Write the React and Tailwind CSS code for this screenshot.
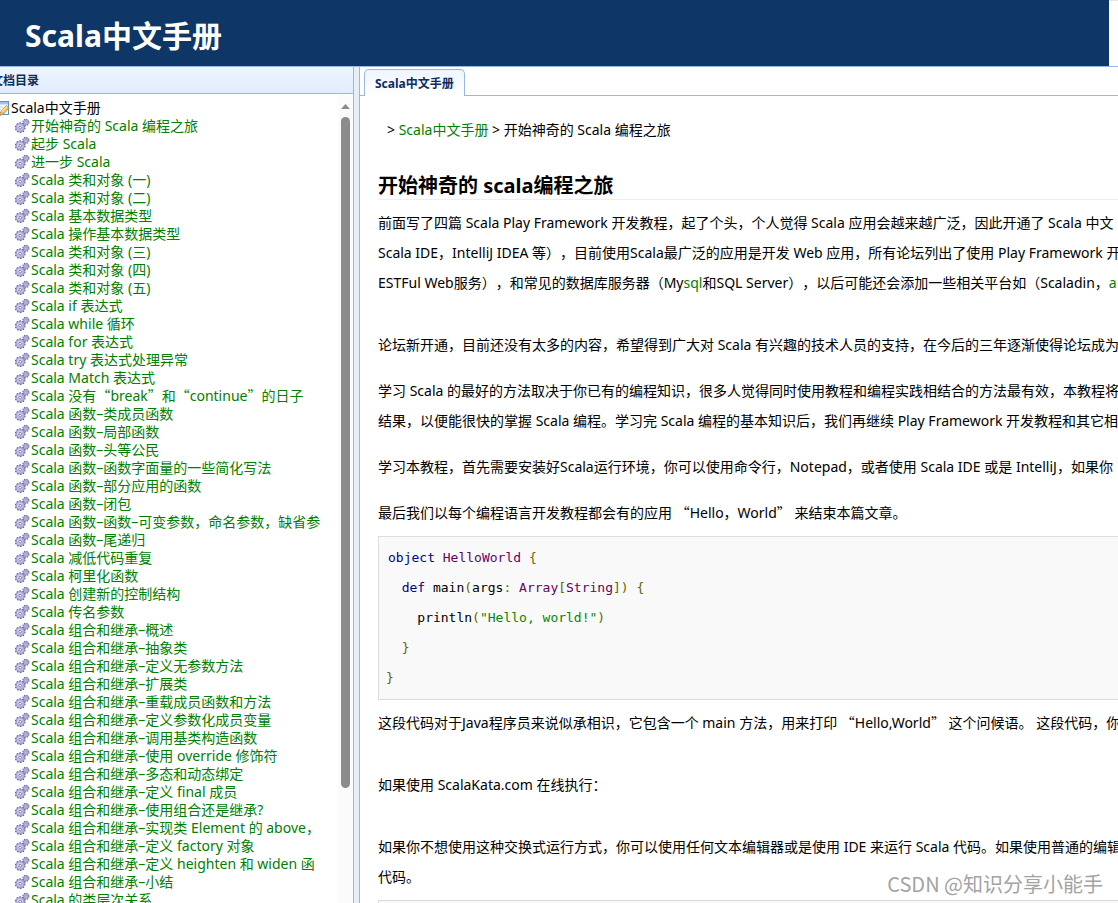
import React from "react";

const chapters = [
    "开始神奇的 Scala 编程之旅",
    "起步 Scala",
    "进一步 Scala",
    "Scala 类和对象 (一)",
    "Scala 类和对象 (二)",
    "Scala 基本数据类型",
    "Scala 操作基本数据类型",
    "Scala 类和对象 (三)",
    "Scala 类和对象 (四)",
    "Scala 类和对象 (五)",
    "Scala if 表达式",
    "Scala while 循环",
    "Scala for 表达式",
    "Scala try 表达式处理异常",
    "Scala Match 表达式",
    "Scala 没有“break”和“continue”的日子",
    "Scala 函数–类成员函数",
    "Scala 函数–局部函数",
    "Scala 函数–头等公民",
    "Scala 函数–函数字面量的一些简化写法",
    "Scala 函数–部分应用的函数",
    "Scala 函数–闭包",
    "Scala 函数–函数–可变参数，命名参数，缺省参",
    "Scala 函数–尾递归",
    "Scala 减低代码重复",
    "Scala 柯里化函数",
    "Scala 创建新的控制结构",
    "Scala 传名参数",
    "Scala 组合和继承–概述",
    "Scala 组合和继承–抽象类",
    "Scala 组合和继承–定义无参数方法",
    "Scala 组合和继承–扩展类",
    "Scala 组合和继承–重载成员函数和方法",
    "Scala 组合和继承–定义参数化成员变量",
    "Scala 组合和继承–调用基类构造函数",
    "Scala 组合和继承–使用 override 修饰符",
    "Scala 组合和继承–多态和动态绑定",
    "Scala 组合和继承–定义 final 成员",
    "Scala 组合和继承–使用组合还是继承?",
    "Scala 组合和继承–实现类 Element 的 above，",
    "Scala 组合和继承–定义 factory 对象",
    "Scala 组合和继承–定义 heighten 和 widen 函",
    "Scala 组合和继承–小结",
    "Scala 的类层次关系",
];

// Curly quotes are full width in Chinese text, so they take the CJK face
const Text = ({children}) =>
    children.split(/([“”])/).map((part, i) =>
        part === "“" || part === "”"
            ? <span key={i} className="leading-none font-['Noto_Sans_CJK_SC',sans-serif]">{part}</span>
            : part
    );

const GearsIcon = () => (
    <svg viewBox="0 0 16 16" className="w-4 h-4 shrink-0" aria-hidden>
        <circle cx="11.9" cy="4.3" r="2.9" fill="none" stroke="#66669c" strokeWidth="1.4" strokeDasharray="1.25 1.03"/>
        <circle cx="11.9" cy="4.3" r="2.6" fill="#b4b4dc" stroke="#8080b4" strokeWidth="0.6"/>
        <circle cx="11.9" cy="4.3" r="0.9" fill="#f4f4ff" stroke="#7474a8" strokeWidth="0.5"/>
        <circle cx="6.2" cy="9.7" r="4.6" fill="none" stroke="#66669c" strokeWidth="1.6" strokeDasharray="1.6 1.29"/>
        <circle cx="6.2" cy="9.7" r="4.1" fill="#b8b8e0" stroke="#8484b8" strokeWidth="0.7"/>
        <circle cx="5.7" cy="9.2" r="2.6" fill="#cacaf0"/>
        <circle cx="6.2" cy="9.7" r="1.3" fill="#f4f4ff" stroke="#7070a6" strokeWidth="0.8"/>
    </svg>
);

const EditIcon = () => (
    <svg viewBox="0 0 16 16" className="w-4 h-4 shrink-0" aria-hidden>
        <rect x="0.5" y="1.5" width="15" height="13" fill="#ffffff" stroke="#5b8fd0"/>
        <rect x="1" y="2" width="14" height="2.5" fill="#9cc4f0"/>
        <path d="M3 7h7M3 9.5h5M3 12h4" stroke="#b8d0ea"/>
        <path d="M7 15.2l1-3.6 5.2-6.2 2.8 2.4-5.4 6.2z" fill="#f6c04c" stroke="#c08828" strokeWidth="0.8"/>
        <path d="M9 12l5-5.6" stroke="#fde9a8" strokeWidth="1.2"/>
        <path d="M7 15.2l1-3.6 2.6 2.4z" fill="#f4dcb8" stroke="#8a6a3a" strokeWidth="0.5"/>
    </svg>
);

const Sidebar = () => (
    <aside className="-ml-4 w-[370px] shrink-0 flex flex-col border-r border-[#95b8e7]">
        <h2 className="h-[27px] shrink-0 pl-[7px] text-[12px] leading-[28px] font-bold text-[#0e2d5f] border-b border-[#95b8e7] bg-linear-to-b from-[#eff5ff] to-[#e0ecff]">
            文档目录
        </h2>
        <div className="flex-1 min-h-0 flex">
            <nav className="flex-1 min-w-0 pt-[5px] pl-[9px] overflow-hidden whitespace-nowrap">
                <div className="flex items-center gap-0.5 h-[18px]">
                    <EditIcon/>
                    Scala中文手册
                </div>
                <ul className="pl-[21px]">
                    {chapters.map((c) => (
                        <li key={c} className="flex items-center gap-px h-[18px]">
                            <GearsIcon/>
                            <a href="#" className="text-[#008000]"><Text>{c}</Text></a>
                        </li>
                    ))}
                </ul>
            </nav>
            {/* Scrollbar */}
            <div className="w-[15px] flex flex-col items-center gap-2 pt-[10px] bg-[#fbfbfb]" aria-hidden>
                <svg viewBox="0 0 9 5" className="w-[9px] h-[5px] shrink-0"><path d="M4.5 0L9 5H0z" fill="#8b8b8b"/></svg>
                <div className="w-[9px] h-[84%] rounded-full bg-[#8b8b8b]"/>
            </div>
        </div>
    </aside>
);

const Kwd = ({children}) => <span className="text-[#000088]">{children}</span>;
const Typ = ({children}) => <span className="text-[#660066]">{children}</span>;
const Pun = ({children}) => <span className="text-[#666600]">{children}</span>;
const Str = ({children}) => <span className="text-[#008800]">{children}</span>;

const Code = () => (
    <pre className="my-2 -mr-px px-[7px] py-[6px] border border-[#dddddd] bg-[#f9f9f9] font-['DejaVu_Sans_Mono',monospace] text-[13px] leading-[30px]">
        <code className="font-['DejaVu_Sans_Mono',monospace]">
            <span className="pl-0.5"><Kwd>object</Kwd></span> <Typ>HelloWorld</Typ> <Pun>{"{"}</Pun>{"\n"}
            {"  "}<Kwd>def</Kwd> main<Pun>(</Pun>args<Pun>:</Pun> <Typ>Array</Typ><Pun>[</Pun><Typ>String</Typ><Pun>{"])"}</Pun> <Pun>{"{"}</Pun>{"\n"}
            {"    "}println<Pun>(</Pun><Str>"Hello, world!"</Str><Pun>)</Pun>{"\n"}
            {"  "}<Pun>{"}"}</Pun>{"\n"}
            <Pun>{"}"}</Pun>
        </code>
    </pre>
);

const Article = () => (
    <article className="pl-[18px] pt-[19px] whitespace-nowrap overflow-hidden">
        <div className="pl-[9px] leading-[30px]">
            &gt; <a href="#" className="text-[#008000]">Scala中文手册</a> &gt; 开始神奇的 Scala 编程之旅
        </div>
        <h1 className="mt-[25px] h-[30px] text-[20px] leading-[32px] font-bold border-b border-[#eeeeee]">
            开始神奇的 scala编程之旅
        </h1>
        <div className="mt-2 leading-[30px]">
            <p>
                前面写了四篇 Scala Play Framework 开发教程，起了个头，个人觉得 Scala 应用会越来越广泛，因此开通了 Scala 中文<br/>
                Scala IDE，IntelliJ IDEA 等），目前使用Scala最广泛的应用是开发 Web 应用，所有论坛列出了使用 Play Framework 开<br/>
                ESTFul Web服务），和常见的数据库服务器（My<a href="#" className="text-[#008000]">sql</a>和SQL Server），以后可能还会添加一些相关平台如（Scaladin，<a href="#" className="text-[#008000]">a</a>
            </p>
            <p className="mt-8">
                论坛新开通，目前还没有太多的内容，希望得到广大对 Scala 有兴趣的技术人员的支持，在今后的三年逐渐使得论坛成为
            </p>
            <p className="mt-4">
                学习 Scala 的最好的方法取决于你已有的编程知识，很多人觉得同时使用教程和编程实践相结合的方法最有效，本教程将<br/>
                结果，以便能很快的掌握 Scala 编程。学习完 Scala 编程的基本知识后，我们再继续 Play Framework 开发教程和其它相
            </p>
            <p className="mt-4">
                学习本教程，首先需要安装好Scala运行环境，你可以使用命令行，Notepad，或者使用 Scala IDE 或是 IntelliJ，如果你
            </p>
            <p className="mt-4">
                <Text>最后我们以每个编程语言开发教程都会有的应用 “Hello，World” 来结束本篇文章。</Text>
            </p>
            <Code/>
            <p>
                <Text>这段代码对于Java程序员来说似承相识，它包含一个 main 方法，用来打印 “Hello,World” 这个问候语。 这段代码，你</Text>
            </p>
            <p className="mt-8">如果使用 ScalaKata.com 在线执行：</p>
            <p className="mt-8">
                如果你不想使用这种交换式运行方式，你可以使用任何文本编辑器或是使用 IDE 来运行 Scala 代码。如果使用普通的编辑<br/>
                代码。
            </p>
            <Code/>
        </div>
    </article>
);

const App = () => (
    <div className="relative h-screen flex flex-col overflow-hidden bg-white text-black text-[14px] leading-[18px] font-['Noto_Sans','Noto_Sans_CJK_SC',sans-serif] [text-spacing-trim:space-all]">
        <header className="h-[67px] shrink-0 flex border-b border-[#95b8e7]">
            <div className="flex-1 pl-[25px] pt-[6px] bg-[#0e3768]">
                <span className="text-[30px] leading-[60px] font-bold text-white">Scala中文手册</span>
            </div>
            <div className="w-[9px] border-t border-[#e5e5e5]"/>
        </header>
        <div className="flex-1 min-h-0 flex">
            <Sidebar/>
            <div className="w-[5px] shrink-0 bg-[#e6eef8]"/>
            <main className="flex-1 min-w-0 border-l border-[#95b8e7] overflow-hidden">
                <div className="h-[29px] pt-0.5 pl-1 border-b border-[#95b8e7]" role="tablist">
                    <button
                        type="button"
                        role="tab"
                        aria-selected="true"
                        className="block h-[27px] px-[10px] rounded-t-[5px] border border-b-0 border-[#95b8e7] bg-linear-to-b from-[#eff5ff] to-white text-[12px] leading-[28px] font-bold text-[#0e2d5f]"
                    >
                        Scala中文手册
                    </button>
                </div>
                <Article/>
            </main>
        </div>
        <div className="absolute right-[15px] bottom-[4px] text-[20px] leading-[30px] text-[#a3a3a3] font-['Noto_Sans_CJK_SC',sans-serif]">
            CSDN @知识分享小能手
        </div>
    </div>
);

export default App;
